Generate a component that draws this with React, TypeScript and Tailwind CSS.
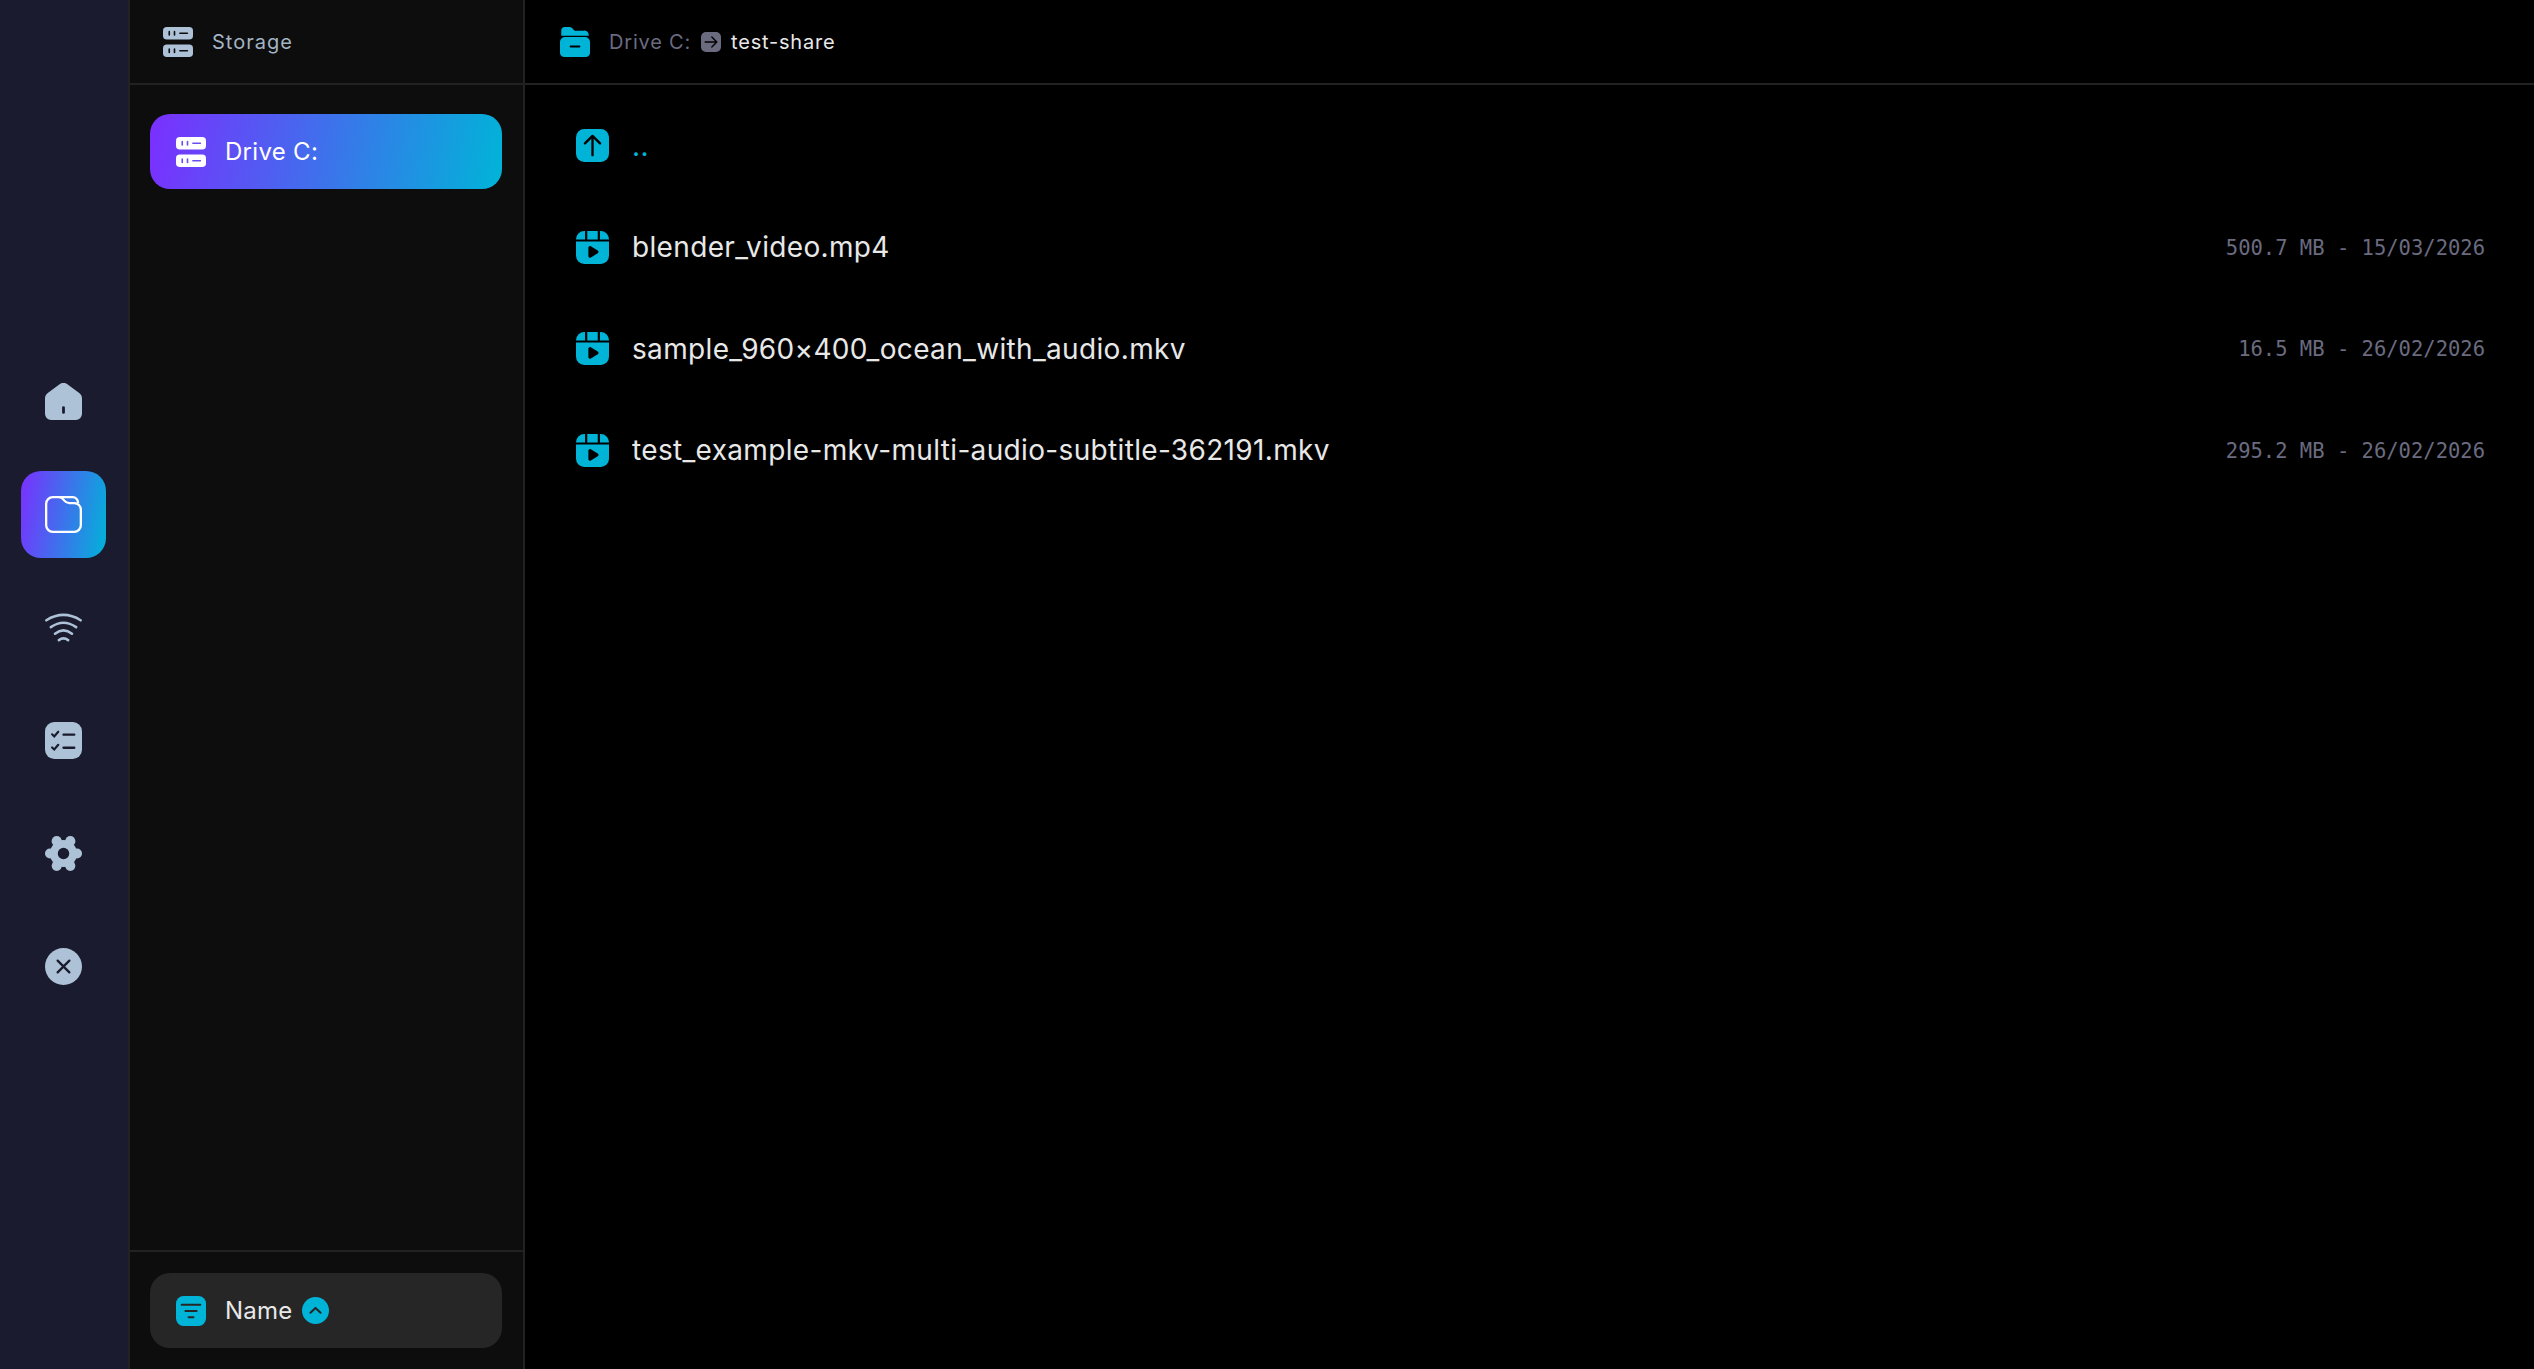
import React from 'react';

type IconProps = { className?: string; cut?: string };

const HomeIcon = ({ className }: IconProps) => (
  <svg viewBox="0 0 24 24" className={className}>
    <path fill="currentColor" d="M9.700.7a3.800 3.800 0 0 1 4.600 0l7.700 5.600A4.600 4.600 0 0 1 24 10.100V20a4 4 0 0 1-4 4H4a4 4 0 0 1-4-4V10.100a4.600 4.600 0 0 1 2-3.800z" />
    <rect x="11.100" y="15" width="1.800" height="5" rx="0.900" fill="#1a1b2e" />
  </svg>
);

const FolderIcon = ({ className }: IconProps) => (
  <svg viewBox="0.800 0.800 22.400 22.400" className={className} fill="none" stroke="currentColor" strokeWidth="1.400" strokeLinejoin="round">
    <path d="M1.500 5.500A4 4 0 0 1 5.500 1.500H9.500C11 1.500 11.500 2.400 12.500 3.600C13.300 4.600 14 5.100 15.500 5.100H18.500A4 4 0 0 1 22.500 9.100V18.500A4 4 0 0 1 18.500 22.500H5.500A4 4 0 0 1 1.500 18.500Z" />
    <path d="M9.500 1.500H17.500A3.300 3.300 0 0 1 20.800 5.100" />
  </svg>
);

const WifiIcon = ({ className }: IconProps) => (
  <svg viewBox="0 0 24 24" className={className} fill="none" stroke="currentColor" strokeWidth="1.700" strokeLinecap="round">
    <path d="M.9 7.300Q12 .4 23.100 7.300" />
    <path d="M3.800 11.800Q12 6 20.200 11.800" />
    <path d="M6.500 16Q12 11.600 17.500 16" />
    <path d="M9 20.200Q12 18 15 20.200" />
  </svg>
);

const TasksIcon = ({ className }: IconProps) => (
  <svg viewBox="0 0 24 24" className={className}>
    <rect width="24" height="24" rx="6" fill="currentColor" />
    <g fill="none" stroke="#1a1b2e" strokeLinecap="round">
      <path strokeWidth="1.400" d="M4.600 8 6 9.300 8.600 6.300M4.600 16.500 6 17.800 8.600 14.800" />
      <path strokeWidth="1.500" d="M12 8.200H19M12 16.700H19" />
    </g>
  </svg>
);

const GearIcon = ({ className }: IconProps) => (
  <svg viewBox="0 0 24 24" className={className} fill="currentColor">
    <circle cx="12" cy="12" r="8.800" />
    <circle cx="20.800" cy="12" r="3.200" />
    <circle cx="3.200" cy="12" r="3.200" />
    <circle cx="16.400" cy="4" r="3.300" />
    <circle cx="7.600" cy="4" r="3.300" />
    <circle cx="16.400" cy="20" r="3.300" />
    <circle cx="7.600" cy="20" r="3.300" />
    <circle cx="12" cy="12" r="3.700" fill="#1a1b2e" />
  </svg>
);

const CloseIcon = ({ className }: IconProps) => (
  <svg viewBox="0 0 24 24" className={className}>
    <circle cx="12" cy="12" r="12" fill="currentColor" />
    <path d="M8.200 8.200 15.800 15.800M15.800 8.200 8.200 15.800" stroke="#1a1b2e" strokeWidth="1.500" strokeLinecap="round" />
  </svg>
);

const ServerIcon = ({ className, cut = '#0d0d0d' }: IconProps) => (
  <svg viewBox="0 0 24 24" className={className}>
    <rect y="0" width="24" height="10" rx="3" fill="currentColor" />
    <rect y="14" width="24" height="10" rx="3" fill="currentColor" />
    <g stroke={cut} strokeWidth="1.300" strokeLinecap="round">
      <path d="M5 3.700V6.300M9.200 3.700V6.300M13.500 5H19.500" />
      <path d="M5 17.700V20.300M9.200 17.700V20.300M13.500 19H19.500" />
    </g>
  </svg>
);

const FolderOpenIcon = ({ className }: IconProps) => (
  <svg viewBox="0 0 24 24" className={className} fill="currentColor">
    <path d="M1 7V3a3 3 0 0 1 3-3h3.500c1.500 0 2.200.8 3 1.800.7.900 1.200 1.200 2.500 1.200h5.500A3.500 3.500 0 0 1 23 6.500V7z" />
    <path d="M0 12a4 4 0 0 1 4-4h16a4 4 0 0 1 4 4v8.500a3.500 3.500 0 0 1-3.500 3.500h-17A3.500 3.500 0 0 1 0 20.500z" />
    <path d="M8.500 15.600H15.500" stroke="#000" strokeWidth="1.600" strokeLinecap="round" />
  </svg>
);

const ArrowBox = ({ className }: IconProps) => (
  <svg viewBox="0 0 24 24" className={className}>
    <rect width="24" height="24" rx="6" fill="currentColor" />
    <path d="M5 12H19M13 6l6 6-6 6" fill="none" stroke="#000" strokeWidth="1.700" strokeLinecap="round" strokeLinejoin="round" />
  </svg>
);

const UpIcon = ({ className }: IconProps) => (
  <svg viewBox="0 0 24 24" className={className}>
    <rect width="24" height="24" rx="6" fill="currentColor" />
    <path d="M12 19V5M6.500 10.500 12 5l5.500 5.500" fill="none" stroke="#000" strokeWidth="1.700" strokeLinecap="round" strokeLinejoin="round" />
  </svg>
);

const VideoIcon = ({ className }: IconProps) => (
  <svg viewBox="0 0 24 24" className={className} fill="currentColor">
    <path d="M0 6.200V6a6 6 0 0 1 6-6h.6v6.200z" />
    <rect x="8.200" y="0" width="7.600" height="6.200" />
    <path d="M17.400 0H18a6 6 0 0 1 6 6v.2h-6.600z" />
    <path d="M0 7.600H24V18a6 6 0 0 1-6 6H6a6 6 0 0 1-6-6z" />
    <path d="M9 12.200c0-1 1-1.600 1.800-1.100l5 3c.8.500.8 1.600 0 2.100l-5 3c-.8.500-1.800-.1-1.800-1.100z" fill="#000" />
  </svg>
);

const FilterIcon = ({ className }: IconProps) => (
  <svg viewBox="0 0 24 24" className={className}>
    <rect width="24" height="24" rx="6" fill="currentColor" />
    <path d="M4.500 7H19.500M7.500 12H16.500M10 17H14" stroke="#262626" strokeWidth="1.500" strokeLinecap="round" />
  </svg>
);

const ChevronCircle = ({ className }: IconProps) => (
  <svg viewBox="0 0 24 24" className={className}>
    <circle cx="12" cy="12" r="12" fill="currentColor" />
    <path d="M7.500 14 12 9.700 16.500 14" fill="none" stroke="#262626" strokeWidth="1.800" strokeLinecap="round" strokeLinejoin="round" />
  </svg>
);

const navItems = [
  { id: 'home', Icon: HomeIcon },
  { id: 'files', Icon: FolderIcon, active: true },
  { id: 'network', Icon: WifiIcon },
  { id: 'tasks', Icon: TasksIcon },
  { id: 'settings', Icon: GearIcon },
  { id: 'close', Icon: CloseIcon },
];

const files = [
  { name: 'blender_video.mp4', info: '500.7 MB - 15/03/2026' },
  { name: 'sample_960×400_ocean_with_audio.mkv', info: '16.5 MB - 26/02/2026' },
  { name: 'test_example-mkv-multi-audio-subtitle-362191.mkv', info: '295.2 MB - 26/02/2026' },
];

export default function App() {
  return (
    <div className="flex h-screen w-full overflow-hidden bg-black font-[Inter,sans-serif] text-[#e8e8e8]">
      <nav className="flex w-[128px] shrink-0 flex-col items-center justify-center gap-[26px] bg-[#1a1b2e] pr-[1px] pb-[1px]">
        {navItems.map(({ id, Icon, active }) => (
          <button
            key={id}
            className={
              active
                ? 'flex h-[87px] w-[85px] items-center justify-center rounded-[20px] bg-[linear-gradient(100deg,#7b2fff,#00b4d8)] text-white'
                : 'flex h-[87px] w-[85px] items-center justify-center rounded-[20px] text-[#adc2d6]'
            }
          >
            <Icon className="h-[37px] w-[37px]" />
          </button>
        ))}
      </nav>

      <aside className="flex w-[397px] shrink-0 flex-col border-x-2 border-[#222222] bg-[#0d0d0d]">
        <div className="flex h-[85px] shrink-0 items-center gap-[19px] border-b-2 border-[#222222] pl-[33px]">
          <ServerIcon className="h-[30px] w-[30px] text-[#adc2d6]" />
          <span className="pt-[1px] text-[20px] tracking-[1px] text-[#a3b4c4]">Storage</span>
        </div>
        <div className="flex-1 px-[20px] pt-[29px]">
          <button className="flex h-[75px] w-[352px] items-center gap-[19px] rounded-[20px] bg-[linear-gradient(100deg,#7b2fff,#00b4d8)] pl-[26px] text-[24px] tracking-[0.3px] text-white">
            <ServerIcon className="h-[30px] w-[30px] text-white" cut="#6a4ff2" />
            <span>Drive C:</span>
          </button>
        </div>
        <div className="shrink-0 border-t-2 border-[#222222] px-[20px] pt-[21px] pb-[21px]">
          <button className="flex h-[75px] w-[352px] items-center rounded-[20px] bg-[#262626] pl-[26px] text-[24px] tracking-[0.2px] text-[#e8e8e8]">
            <FilterIcon className="h-[30px] w-[30px] text-[#00b4d8]" />
            <span className="ml-[19px] pt-[1px]">Name</span>
            <ChevronCircle className="ml-[10px] h-[27px] w-[27px] text-[#00b4d8]" />
          </button>
        </div>
      </aside>

      <main className="flex min-w-0 flex-1 flex-col">
        <div className="flex h-[85px] shrink-0 items-center border-b-2 border-[#222222] pl-[35px] text-[20px] tracking-[0.8px]">
          <FolderOpenIcon className="h-[30px] w-[30px] text-[#00b4d8]" />
          <span className="ml-[19px] pt-[1px] text-[#6b6b80]">Drive C:</span>
          <ArrowBox className="ml-[10px] h-[20px] w-[20px] text-[#6b6b80]" />
          <span className="ml-[10px] pt-[1px] text-[#e8e8e8]">test-share</span>
        </div>
        <div className="flex flex-col pt-[10px] pr-[49px] pl-[51px]">
          <div className="flex h-[101.500px] items-center gap-[23px]">
            <UpIcon className="h-[33px] w-[33px] text-[#00b4d8]" />
            <span className="text-[28px] tracking-[0.34px] text-[#00b4d8]">..</span>
          </div>
          {files.map((file) => (
            <div key={file.name} className="flex h-[101.500px] items-center gap-[23px]">
              <VideoIcon className="h-[33px] w-[33px] shrink-0 text-[#00b4d8]" />
              <span className="flex-1 truncate text-[28px] tracking-[0.34px]">{file.name}</span>
              <span className="pt-[2px] font-['DejaVu_Sans_Mono',monospace] text-[20.500px] text-[#6b6b80]">{file.info}</span>
            </div>
          ))}
        </div>
      </main>
    </div>
  );
}
